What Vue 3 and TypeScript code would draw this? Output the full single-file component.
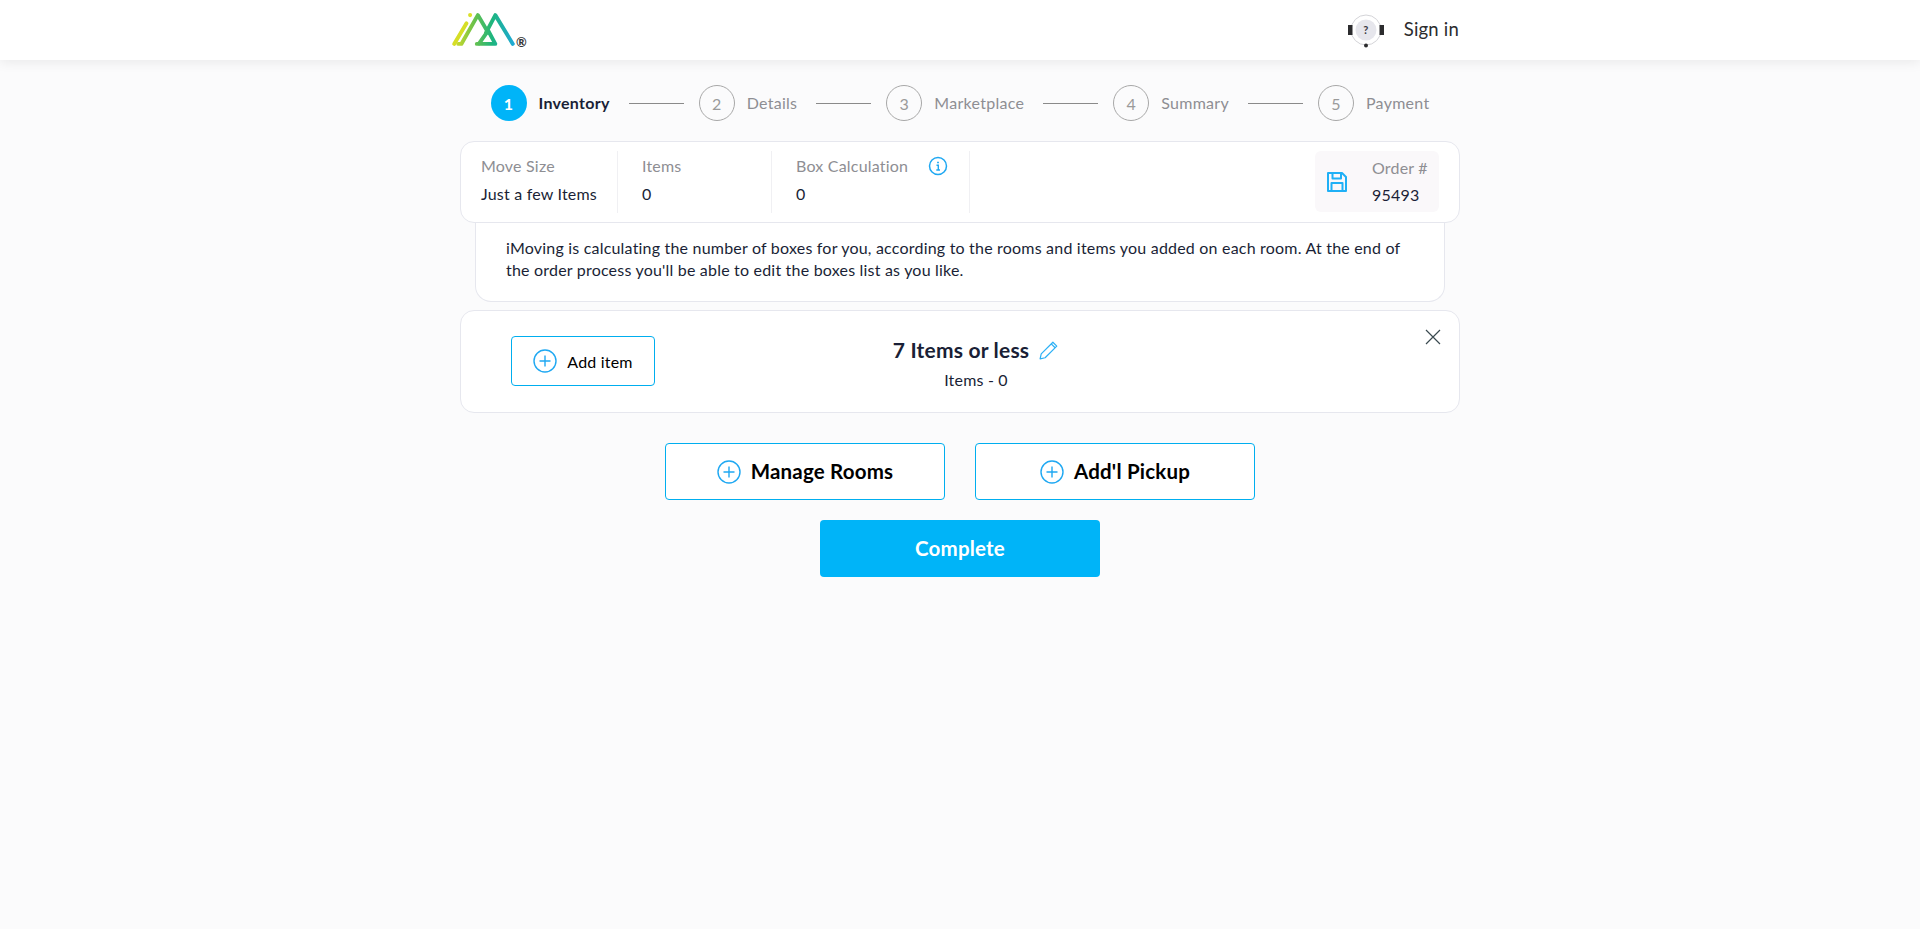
<template>
  <div class="page">
    <header class="topbar">
      <div class="topbar-inner">
        <div class="logo">
          <svg width="68" height="36" viewBox="0 0 66 35" fill="none" stroke-width="3.800" stroke-linecap="round" stroke-linejoin="round">
            <defs>
              <linearGradient id="logoGrad" gradientUnits="userSpaceOnUse" x1="2" y1="20" x2="62" y2="20">
                <stop offset="0" stop-color="#e3e022" />
                <stop offset="0.35" stop-color="#6cc24a" />
                <stop offset="0.65" stop-color="#1db57e" />
                <stop offset="1" stop-color="#1fa9d6" />
              </linearGradient>
            </defs>
            <path d="M4 32 L16 12" stroke="#d6de26" />
            <circle cx="19.500" cy="4" r="2" fill="#dbe02a" stroke="none" />
            <path d="M8 32 L11 32 L27 4 L37 21" stroke="url(#logoGrad)" />
            <path d="M26 32 L38 32 L44 32 L37 19 L28 32" stroke="url(#logoGrad)" />
            <path d="M35 21 L44 4 L61 32" stroke="url(#logoGrad)" />
          </svg>
          <span class="reg">®</span>
        </div>
        <div class="account">
          <svg class="help" width="36" height="38" viewBox="0 0 36 38" fill="none">
            <circle cx="18" cy="18" r="15" stroke="#d4d4d8" stroke-width="1" />
            <circle cx="18" cy="18" r="10.500" fill="#e6e6ec" />
            <rect x="0" y="13" width="4.500" height="10" fill="#2c2c2e" />
            <rect x="31.500" y="13" width="4.500" height="10" fill="#2c2c2e" />
            <circle cx="18" cy="33.500" r="2" fill="#2c2c2e" />
            <text x="18" y="22" text-anchor="middle" class="help-q">?</text>
          </svg>
          <span class="signin">Sign in</span>
        </div>
      </div>
    </header>

    <main class="content">
      <nav class="stepper">
        <template v-for="(step, i) in steps" :key="step">
          <div class="step" :class="{ active: i === 0 }">
            <span class="step-num">{{ i + 1 }}</span>
            <span class="step-label">{{ step }}</span>
          </div>
          <span v-if="i < steps.length - 1" class="step-line"></span>
        </template>
      </nav>

      <section class="summary">
        <div class="col col-size">
          <span class="lbl">Move Size</span>
          <span class="val">Just a few Items</span>
        </div>
        <div class="col col-items">
          <span class="lbl">Items</span>
          <span class="val">0</span>
        </div>
        <div class="col col-box">
          <span class="lbl lbl-info">
            Box Calculation
            <svg width="20" height="20" viewBox="0 0 20 20" fill="none" stroke="#1fa8f2">
              <circle cx="10" cy="10" r="8.500" stroke-width="1.500" />
              <path d="M8.500 9.200 H10.300 V14 M8.300 14 H12" stroke-width="1.400" />
              <path d="M10 5.800 V7.200" stroke-width="1.800" />
            </svg>
          </span>
          <span class="val">0</span>
        </div>
        <div class="order">
          <svg width="20" height="20" viewBox="0 0 20 20" fill="none" stroke="#1fb0f6" stroke-width="2" stroke-linejoin="round">
            <path d="M1 1 H15 L19 5 V19 H1 Z" />
            <path d="M5.500 1 V6.500 H14 V1" />
            <path d="M4.500 19 V11 H15.500 V19" />
          </svg>
          <div class="order-text">
            <span class="lbl">Order #</span>
            <span class="val">95493</span>
          </div>
        </div>
      </section>

      <div class="note">
        iMoving is calculating the number of boxes for you, according to the rooms and items you added on each room. At the end of the order process you'll be able to edit the boxes list as you like.
      </div>

      <section class="room">
        <button class="btn-add" type="button">
          <svg class="plus" width="24" height="24" viewBox="0 0 24 24" fill="none" stroke="#1fa8f2" stroke-width="1.400">
            <circle cx="12" cy="12" r="11" />
            <path d="M12 6.500 V17.500 M6.500 12 H17.500" />
          </svg>
          Add item
        </button>
        <div class="room-info">
          <div class="room-title">
            7 Items or less
            <svg width="20" height="20" viewBox="0 0 18 18" fill="none" stroke="#2cb0f5" stroke-width="1.100" stroke-linejoin="round">
              <path d="M1 17 L2 12.500 L12.500 2 L16 5.500 L5.500 16 Z" />
              <path d="M11 3.500 L14.500 7" />
            </svg>
          </div>
          <div class="room-count">Items - 0</div>
        </div>
        <svg class="close" width="16" height="16" viewBox="0 0 16 16" stroke="#3a4a50" stroke-width="1.200">
          <path d="M1 1 L15 15 M15 1 L1 15" />
        </svg>
      </section>

      <div class="actions">
        <button v-for="label in actionLabels" :key="label" class="btn-big" type="button">
          <svg width="24" height="24" viewBox="0 0 24 24" fill="none" stroke="#1fa8f2" stroke-width="1.400">
            <circle cx="12" cy="12" r="11" />
            <path d="M12 6.500 V17.500 M6.500 12 H17.500" />
          </svg>
          {{ label }}
        </button>
      </div>
      <button class="btn-complete" type="button">Complete</button>
    </main>
  </div>
</template>

<script setup lang="ts">
const steps: string[] = ['Inventory', 'Details', 'Marketplace', 'Summary', 'Payment']
const actionLabels: string[] = ['Manage Rooms', "Add'l Pickup"]
</script>

<style>
html,
body {
  margin: 0;
  background: #fbfbfc;
}
</style>

<style scoped>
.page {
  min-height: 929px;
  background: #fbfbfc;
  font-family: "Lato", "Noto Sans", sans-serif;
  font-size: 16px;
  letter-spacing: 0.2px;
  color: #1a1f36;
}

.topbar {
  height: 60px;
  background: #fff;
  box-shadow: 0 2px 12px rgba(0, 0, 0, 0.08);
}

.topbar-inner {
  width: 1016px;
  height: 60px;
  margin: 0 auto;
  display: flex;
  justify-content: space-between;
  align-items: center;
}

.logo {
  display: flex;
  align-items: flex-end;
  height: 36px;
  margin: -2px 0 0 -2px;
}

.reg {
  font-size: 13px;
  font-weight: 700;
  color: #333;
  line-height: 12px;
  margin-bottom: -1px;
  margin-left: -2px;
}

.account {
  display: flex;
  align-items: center;
  gap: 20px;
  padding-right: 9px;
}

.help {
  margin-top: 1px;
}

.help-q {
  font-size: 11px;
  font-weight: 700;
  fill: #3a3a44;
}

.signin {
  font-size: 18.500px;
  color: #2c2c2e;
  margin-top: -2px;
}

.content {
  width: 1000px;
  margin: 0 auto;
  display: flex;
  flex-direction: column;
  align-items: center;
}

.stepper {
  display: flex;
  align-items: center;
  padding: 25px 0 20px;
}

.step {
  display: flex;
  align-items: center;
  gap: 12px;
  color: #8e8e93;
}

.step-label {
  margin-top: -2px;
  letter-spacing: 0.28px;
}

.step-num {
  width: 34px;
  height: 34px;
  border: 1px solid #a8a8a8;
  border-radius: 50%;
  display: flex;
  align-items: center;
  justify-content: center;
  font-size: 16px;
  color: #9a9a9a;
}

.step.active .step-num {
  width: 36px;
  height: 36px;
  border: 0;
  background: #00b4f8;
  color: #fff;
  font-weight: 700;
}

.step.active .step-label {
  color: #1a1f36;
  font-weight: 700;
}

.step-line {
  width: 55px;
  height: 1px;
  background: #8a8a8a;
  margin: 0 15px 0 19px;
}

.summary {
  box-sizing: border-box;
  width: 1000px;
  height: 82px;
  padding: 9px 20px 9px 0;
  background: #fff;
  border: 1px solid #e6e7ee;
  border-radius: 14px;
  display: grid;
  grid-template-columns: 157px 154px 198px 1fr;
  position: relative;
  z-index: 1;
}

.col {
  display: flex;
  flex-direction: column;
  gap: 4px;
  padding: 3px 0 0 24px;
  border-right: 1px solid #f0f0f3;
}

.col-size {
  padding-left: 20px;
}

.lbl {
  line-height: 24px;
  color: #8e8e93;
}

.val {
  line-height: 24px;
  color: #1a1f36;
}

.lbl-info {
  display: flex;
  align-items: center;
  gap: 20px;
}

.order {
  justify-self: end;
  width: 124px;
  height: 61px;
  background: #faf8fa;
  border-radius: 6px;
  display: flex;
  align-items: center;
  padding-left: 12px;
  box-sizing: border-box;
  gap: 25px;
}

.order-text {
  display: flex;
  flex-direction: column;
  gap: 3px;
}

.note {
  box-sizing: border-box;
  width: 970px;
  height: 80px;
  margin-top: -1px;
  padding: 15px 30px 0;
  background: #fff;
  border: 1px solid #e6e7ee;
  border-top: 0;
  border-radius: 0 0 16px 16px;
  line-height: 22px;
}

.room {
  box-sizing: border-box;
  width: 1000px;
  height: 103px;
  margin-top: 8px;
  padding: 25px 50px;
  background: #fff;
  border: 1px solid #e6e7ee;
  border-radius: 14px;
  display: flex;
  position: relative;
}

.btn-add {
  width: 144px;
  height: 50px;
  background: #fff;
  border: 1px solid #00aeef;
  border-radius: 4px;
  display: flex;
  align-items: center;
  justify-content: center;
  gap: 10px;
  font: inherit;
  letter-spacing: inherit;
  color: #000;
  padding: 0;
}

.room-info {
  width: 642px;
  text-align: center;
}

.room-title {
  display: flex;
  align-items: center;
  justify-content: center;
  gap: 10px;
  font-size: 21px;
  font-weight: 700;
  line-height: 28px;
}

.room-count {
  margin-top: 2px;
  line-height: 28px;
}

.close {
  position: absolute;
  top: 18px;
  right: 18px;
}

.actions {
  display: flex;
  gap: 30px;
  margin-top: 30px;
}

.btn-big {
  width: 280px;
  height: 57px;
  background: #fff;
  border: 1px solid #00aeef;
  border-radius: 4px;
  display: flex;
  align-items: center;
  justify-content: center;
  gap: 10px;
  font-family: inherit;
  font-size: 20.500px;
  font-weight: 700;
  letter-spacing: inherit;
  color: #000;
  padding: 0 0 2px;
}

.btn-big svg {
  margin-top: 2px;
}

.btn-complete {
  width: 280px;
  height: 57px;
  margin-top: 20px;
  background: #00b4f8;
  border: 0;
  border-radius: 4px;
  font-family: inherit;
  font-size: 20.500px;
  font-weight: 700;
  letter-spacing: inherit;
  color: #fff;
  padding: 0 0 2px;
}
</style>
